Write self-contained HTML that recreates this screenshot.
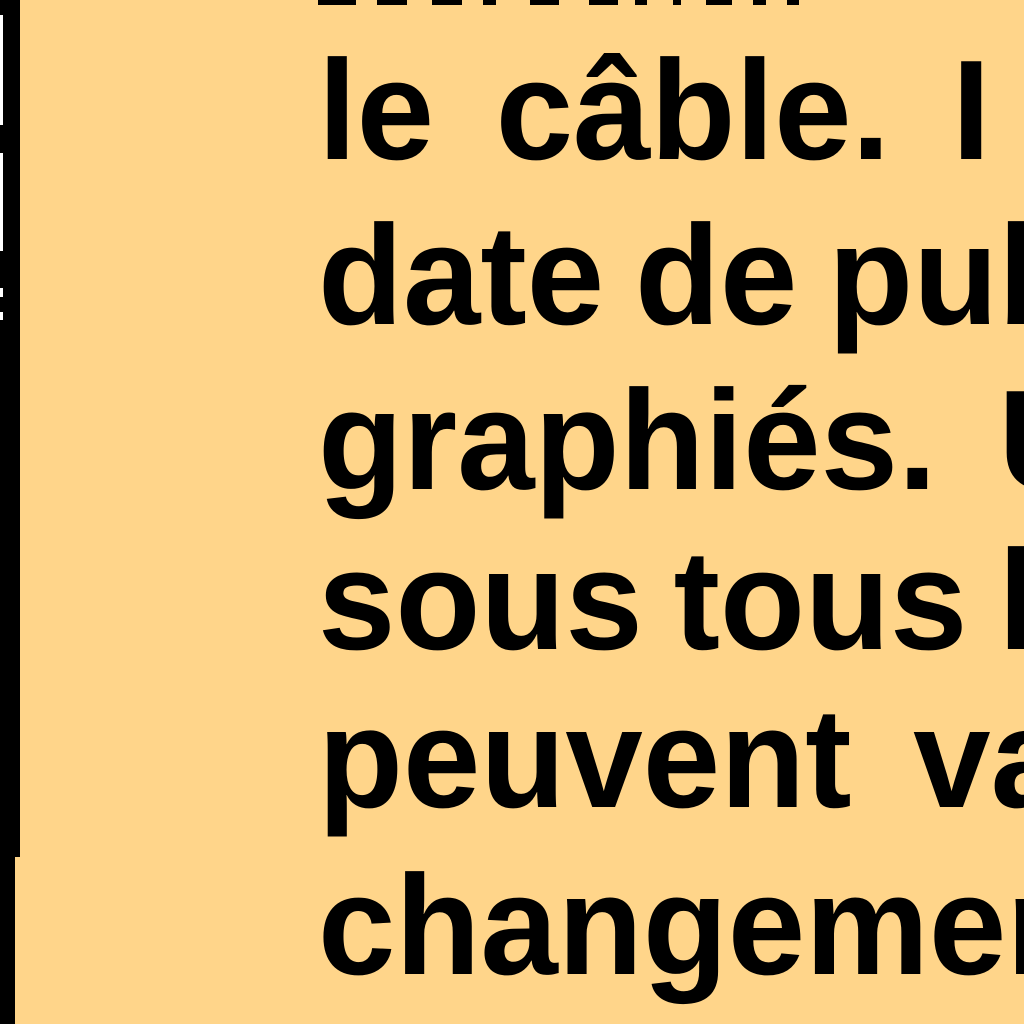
<!DOCTYPE html>
<html><head><meta charset="utf-8"><style>
html,body{margin:0;padding:0;}
body{width:1024px;height:1024px;background:#FFD58A;position:relative;overflow:hidden;}
.t{position:absolute;left:318px;font-family:"Liberation Sans",sans-serif;font-weight:bold;font-size:142px;line-height:142px;color:#000;white-space:pre;transform:scaleX(0.98);transform-origin:0 0;word-spacing:-8px;}
.b{position:absolute;background:#000;top:0;height:5px;}
.w{position:absolute;background:#fff;left:0;width:3px;}
</style></head><body>
<div style="position:absolute;left:0;top:0;width:20px;height:857px;background:#000"></div>
<div style="position:absolute;left:0;top:857px;width:15px;height:167px;background:#000"></div>
<div class="w" style="top:15px;height:110px"></div>
<div class="w" style="top:153px;height:98px"></div>
<div class="w" style="top:288px;height:9px"></div>
<div class="w" style="top:312px;height:8px"></div>
<div class="b" style="left:318px;width:38px"></div>
<div class="b" style="left:377px;width:30px"></div>
<div class="b" style="left:432px;width:30px"></div>
<div class="b" style="left:483px;width:13px"></div>
<div class="b" style="left:530px;width:29px"></div>
<div class="b" style="left:589px;width:29px"></div>
<div class="b" style="left:635px;width:12px"></div>
<div class="b" style="left:673px;width:8px"></div>
<div class="b" style="left:706px;width:26px"></div>
<div class="b" style="left:753px;width:13px"></div>
<div class="b" style="left:787px;width:12px"></div>
<div class="t" style="top:40px">le  câble.  I</div>
<div class="t" style="top:205px">date de publ</div>
<div class="t" style="top:370px">graphiés.  U</div>
<div class="t" style="top:530px">sous tous les</div>
<div class="t" style="top:688px">peuvent  var</div>
<div class="t" style="top:855px">changement</div>
</body></html>
